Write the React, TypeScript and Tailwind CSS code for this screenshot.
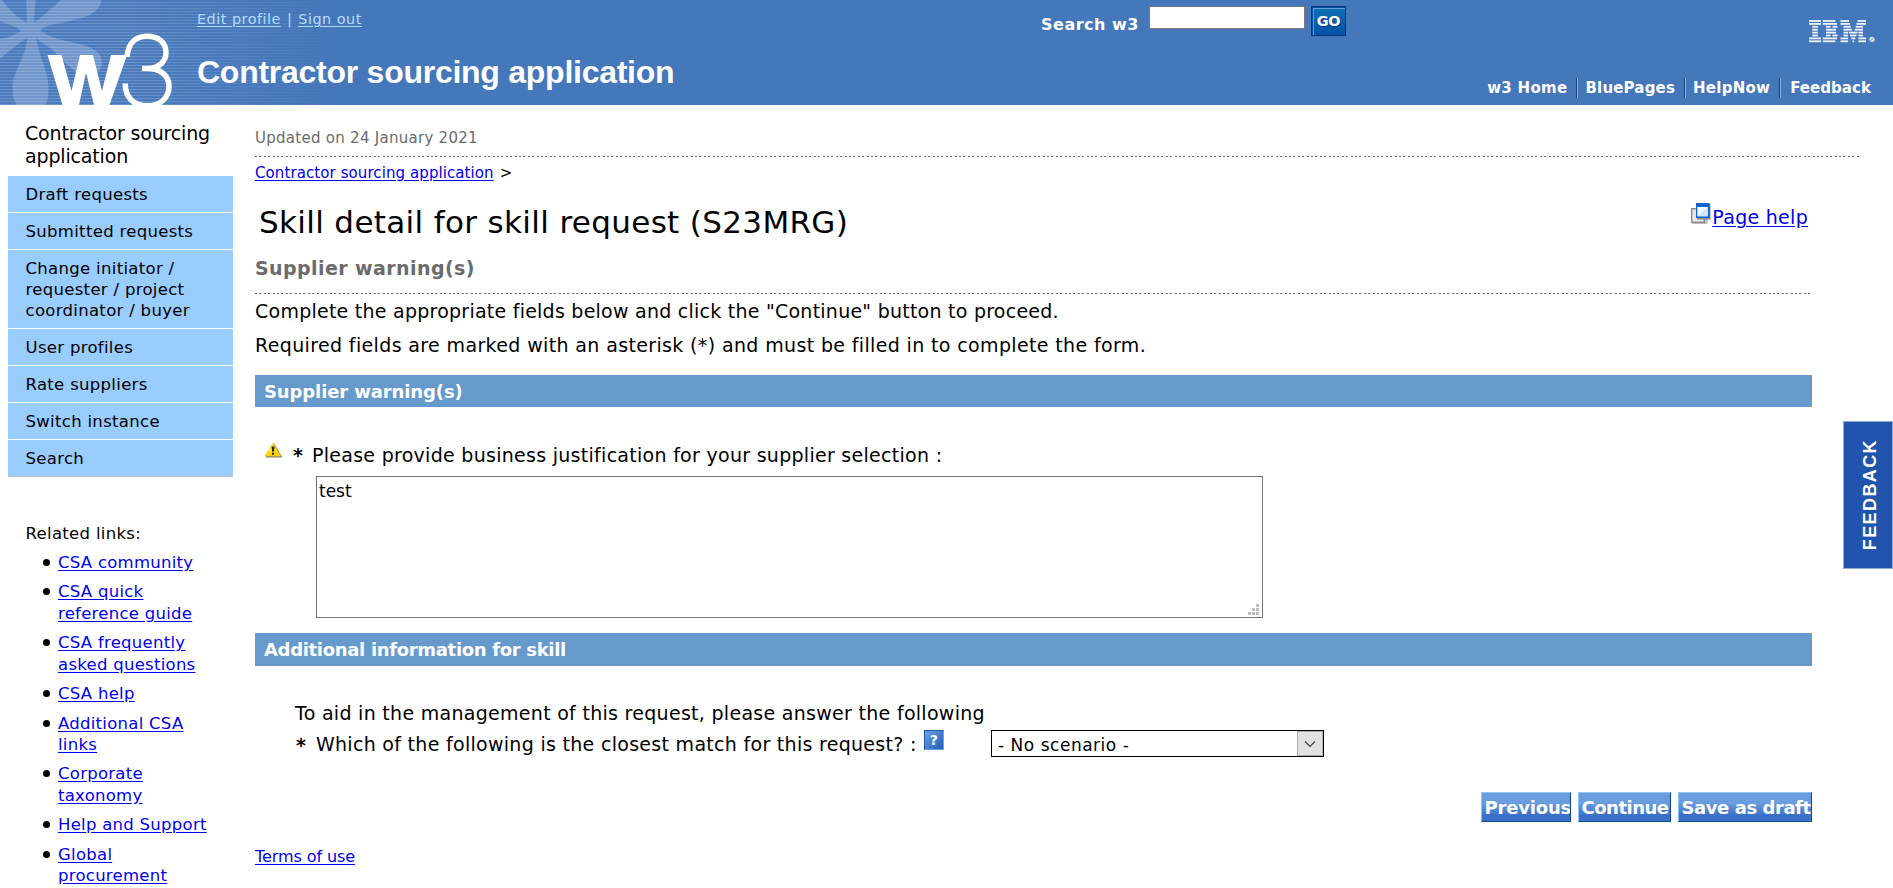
import type { ReactNode } from "react";

const navItems = [
  "Draft requests",
  "Submitted requests",
  "Change initiator / requester / project coordinator / buyer",
  "User profiles",
  "Rate suppliers",
  "Switch instance",
  "Search",
];

const relatedLinks = [
  "CSA community",
  "CSA quick reference guide",
  "CSA frequently asked questions",
  "CSA help",
  "Additional CSA links",
  "Corporate taxonomy",
  "Help and Support",
  "Global procurement",
];

/* One entry per stripe of the logo: [start, width] segments */
const ibmStripes: [number, number][][] = [
  [[0, 12], [13.8, 12.5], [31.5, 8.5], [48.5, 8.5]],
  [[0, 12], [13.8, 14.2], [31.5, 9.5], [47.5, 9.5]],
  [[3.2, 5.6], [17, 4.5], [23.5, 5], [34.5, 7.3], [46.7, 7.3]],
  [[3.2, 5.6], [17, 10], [34.5, 8.3], [45.7, 8.3]],
  [[3.2, 5.6], [17, 10], [34.5, 4.6], [40, 8.5], [49.4, 4.6]],
  [[3.2, 5.6], [17, 4.5], [23.5, 5], [34.5, 4.6], [41, 6.5], [49.4, 4.6]],
  [[0, 12], [13.8, 14.2], [31.5, 7.6], [42.3, 4], [49.4, 7.6]],
  [[0, 12], [13.8, 12.5], [31.5, 7.6], [43.5, 1.6], [49.4, 7.6]],
];

function IbmLogo() {
  return (
    <svg width="67" height="23" viewBox="0 0 67 23" className="block">
      {ibmStripes.map((row, i) =>
        row.map(([x, w], j) => (
          <rect key={`${i}-${j}`} x={x} y={i * 2.9 + 0.1} width={w} height="1.8" fill="#eef3fa" />
        ))
      )}
      <circle cx="63" cy="19.3" r="2.6" fill="#dbe5f3" />
      <path d="M61.3 20.8l3.2-3" stroke="#4577bb" strokeWidth="0.8" />
    </svg>
  );
}

function W3Logo() {
  return (
    <svg width="190" height="105" viewBox="0 0 190 105" className="block">
      <g fill="#fff" fillOpacity="0.21">
        <path d="M26 0h9.5c-.6 10-1.500 17-1 22.500C42 17 52 8 61 0h40.500c-1 11-13 17-29 20.500C58 23.500 46 25 40.500 30 46 36 60 40 75 43c17 3.500 26.500 9 27 19 0 8-6 13-14 13-11 0-19-8-27-17-8-8-15-13-24.500-19.500C37 52 48.500 70 48.500 89c0 6-1 11-3 16h-29c-2.500-5-4-10-4-16C12.500 70 27 56 27 38.500 19 43 10 50 0 59V39c8-1.500 15-4 21-8.500C15 26 8 24 0 21.500V0h2c6 8 13 16.500 24.500 22.500C27.500 17 26.500 8 26 0z" />
      </g>
      <path fill="#fff" d="M47.500 55H61.500L71.500 91 80 55H93L102 91 111 55H127L109.500 105H94L86 72.500 79 105H62.500z" />
      <path
        fill="none"
        stroke="#fff"
        strokeWidth="5.5"
        d="M127 57C128 44 135 36.200 147 36.200C158.500 36.200 166 42.500 166 52.500C166 63 157 68.600 147 68.600H142M147 68.600C160 68.600 169 75 169 86.500C169 98 160 105.800 147.500 105.800C134 105.800 125.200 98 125.200 83.500"
      />
    </svg>
  );
}

function DottedRule({ className }: { className: string }) {
  return (
    <div
      className={`h-px bg-[repeating-linear-gradient(90deg,#666_0px,#666_2px,#fff_2px,#fff_4.4px)] ${className}`}
    />
  );
}

function SectionBar({ className, children }: { className: string; children: ReactNode }) {
  return (
    <h3 className={`bg-[#6699cc] pl-[9px] text-[18px] font-bold text-white ${className}`}>{children}</h3>
  );
}

function ActionButton({ className, children }: { className: string; children: ReactNode }) {
  return (
    <button
      className={`h-[30px] overflow-hidden whitespace-nowrap border border-t-[#8fc3f5] border-l-[#8fc3f5] border-r-[#0f4c94] border-b-[#0f4c94] bg-linear-to-b from-[#6a9ce0] from-35% to-[#3a70c8] to-80% pl-[2.500px] text-left text-[18px] font-bold leading-[30px] text-white ${className}`}
    >
      {children}
    </button>
  );
}

function NavDivider() {
  return <span className="h-[20px] w-[2px] border-l border-l-[#12427f] bg-[#8db4ea]" />;
}

function Header() {
  return (
    <header className="relative flex h-[105px] bg-[#4577bb] text-white">
      <div className="absolute inset-y-0 left-0 w-[400px] bg-[repeating-linear-gradient(180deg,rgba(255,255,255,0.03)_0px,rgba(255,255,255,0.03)_2px,rgba(255,255,255,0.22)_2px,rgba(255,255,255,0.22)_3px)] mask-[linear-gradient(90deg,#000_0%,#000_30%,transparent_85%)]" />
      <div className="relative w-[190px]">
        <W3Logo />
      </div>
      <div className="relative w-[820px] pl-[7px]">
        <div className="mt-[9px] h-[20px] text-[14.400px] leading-[20px] tracking-[0.500px] text-[#b5dcff]">
          <a className="underline underline-offset-2">Edit profile</a>
          <span className="mx-[6px]">|</span>
          <a className="underline underline-offset-2">Sign out</a>
        </div>
        <h1 className="mt-[23px] font-['Liberation_Sans',Arial,sans-serif] text-[32px] font-bold leading-[40px] tracking-[-0.260px]">
          Contractor sourcing application
        </h1>
      </div>
      <div className="flex flex-1 flex-col">
        <div className="flex h-[78px] items-start">
          <label className="mt-[15px] w-[132px] pl-[31px] text-[16px] font-bold leading-[20px] tracking-[0.5px]">
            <span className="whitespace-nowrap">Search w3</span>
          </label>
          <input className="mt-[6px] ml-[7px] h-[23px] w-[156px] border border-[#7a7a7a] bg-white" />
          <button className="mt-[6px] ml-[6px] h-[30px] w-[35px] border border-[#04327f] bg-linear-to-b from-[#1173b5] to-[#0550a5] text-[14.500px] font-bold leading-[29px] tracking-[-0.3px] shadow-[inset_1px_1px_0_#0550a5,inset_2px_2px_0_#5fa0dc] [text-shadow:1px_1px_0_#04327f]">
            GO
          </button>
          <div className="mt-[20px] ml-auto mr-[17px]">
            <IbmLogo />
          </div>
        </div>
        <nav className="flex justify-end pr-[22px] text-[15px] font-bold leading-[20px]">
          <a className="mr-[9px] tracking-[0.3px]">w3 Home</a>
          <NavDivider />
          <a className="mr-[9px] ml-[7px] tracking-[0.180px]">BluePages</a>
          <NavDivider />
          <a className="mr-[9px] ml-[7px] tracking-[0.250px]">HelpNow</a>
          <NavDivider />
          <a className="ml-[9px] tracking-[0.050px]">Feedback</a>
        </nav>
      </div>
    </header>
  );
}

function Sidebar() {
  return (
    <aside className="w-[255px] shrink-0 pt-[17px] pl-[8px]">
      <h2 className="h-[54px] w-[215px] pl-[17px] text-[19px] leading-[23.300px] tracking-[-0.160px]">
        Contractor sourcing application
      </h2>
      <ul className="flex w-[225px] flex-col gap-px border-b border-[#c4c4c4] text-[16.500px] leading-[21px] tracking-[0.310px]">
        {navItems.map((item) => (
          <li key={item} className="bg-[#99ccff] pt-[8px] pr-[24px] pb-[7px] pl-[17.500px]">
            {item}
          </li>
        ))}
      </ul>
      <p className="mt-[46px] pl-[17.500px] text-[16.500px] leading-[21px] tracking-[0.310px]">Related links:</p>
      <ul className="mt-[8px] flex w-[205px] flex-col gap-[8.200px] pl-[50px] text-[16.500px] leading-[21.300px] tracking-[0.270px]">
        {relatedLinks.map((link) => (
          <li key={link} className="relative">
            <span className="absolute top-[7px] -left-[15px] size-[7px] rounded-full bg-black" />
            <a className="block text-[#0000ee] underline underline-offset-2">{link}</a>
          </li>
        ))}
      </ul>
    </aside>
  );
}

function PopupIcon() {
  return (
    <svg width="20" height="21" viewBox="0 0 20 21" className="block">
      <rect x="1.500" y="8" width="15" height="13" fill="#bbb" />
      <rect x="0.700" y="5.700" width="12.600" height="13.600" fill="#e8e8e8" stroke="#8a8a8a" strokeWidth="1.400" />
      <rect x="6" y="1" width="13.500" height="15.500" fill="#888" />
      <rect x="5" y="0" width="13.500" height="15" fill="#0b66cc" />
      <rect x="6.500" y="4" width="10.500" height="9.500" fill="#cfe4fb" />
      <path d="M6.500 4H17L6.500 13.500z" fill="#eff7ff" />
    </svg>
  );
}

function WarningIcon() {
  return (
    <svg width="19" height="16" viewBox="0 0 19 16" className="block">
      <path d="M10 1L18.500 15.500H1.500z" fill="#8f8a6c" />
      <path d="M9 0.500L17 14.300H0.500z" fill="#fbd107" />
      <path d="M9 1.500L4 9.500h4z" fill="#fff04a" />
      <path d="M7.500 4.500h3l-.6 5h-1.800zM8 10.700h2v2H8z" fill="#222" />
    </svg>
  );
}

function HelpIcon() {
  return (
    <span className="flex h-[20px] w-[20px] items-center justify-center border border-[#1f58a8] border-r-[#6ea2dd] border-b-[#6ea2dd] bg-linear-to-br from-[#6fa3e6] to-[#1c5cb8] text-[14px] font-bold leading-[18px] text-white">
      ?
    </span>
  );
}

function Main() {
  return (
    <main className="w-[1605px] shrink-0 pt-[23px]">
      <p className="text-[15px] leading-[20px] tracking-[0.275px] text-[#6b6b6b]">Updated on 24 January 2021</p>
      <DottedRule className="mt-[8px]" />
      <p className="mt-[6px] text-[15px] leading-[20px] tracking-[0.090px]">
        <a className="text-[#0000ee] underline underline-offset-2">Contractor sourcing application</a>
        <span className="ml-[6px]">&gt;</span>
      </p>
      <div className="w-[1557px]">
        <div className="mt-[20px] flex h-[40px] justify-between pl-[4px] pr-[4px]">
          <h1 className="text-[31px] leading-[39px] tracking-[0.340px]">Skill detail for skill request (S23MRG)</h1>
          <div className="flex">
            <PopupIcon />
            <a className="mt-[2px] ml-px h-[24px] text-[19px] leading-[24px] tracking-[0.280px] text-[#0000ee] underline underline-offset-2">
              Page help
            </a>
          </div>
        </div>
        <h2 className="mt-[13px] text-[19px] font-bold leading-[24px] tracking-[0.420px] text-[#6b6b6b]">
          Supplier warning(s)
        </h2>
        <DottedRule className="mt-[13px] mr-[2px]" />
        <p className="mt-[5px] text-[19px] leading-[24px] tracking-[0.245px]">
          Complete the appropriate fields below and click the "Continue" button to proceed.
        </p>
        <p className="mt-[10px] text-[19px] leading-[24px] tracking-[0.362px]">
          Required fields are marked with an asterisk (*) and must be filled in to complete the form.
        </p>
        <SectionBar className="mt-[18px] h-[32px] leading-[34px] tracking-[-0.110px]">Supplier warning(s)</SectionBar>

        <div className="mt-[35px] flex h-[24px] pl-[9px] text-[19px] leading-[24px]">
          <WarningIcon />
          <span className="ml-[10px] font-bold leading-[26px]">*</span>
          <span className="ml-[9px] pt-px tracking-[0.285px]">
            Please provide business justification for your supplier selection :
          </span>
        </div>
        <div className="relative mt-[10px] ml-[61px] h-[142px] w-[947px] border border-[#767676] bg-white pt-[4px] pl-[2px] text-[17px] leading-[20px]">
          test
          <svg width="12" height="12" viewBox="0 0 12 12" className="absolute right-[2px] bottom-[1px]">
            <path
              fill="#bdbdbd"
              d="M8 0h3v3H8zM4 4h3v3H4zM8 4h3v3H8zM0 8h3v3H0zM4 8h3v3H4zM8 8h3v3H8z"
            />
          </svg>
        </div>
        <SectionBar className="mt-[15px] h-[33px] leading-[33px] tracking-[-0.320px]">
          Additional information for skill
        </SectionBar>

        <p className="mt-[35px] pl-[40px] text-[19px] leading-[24px] tracking-[0.290px]">
          To aid in the management of this request, please answer the following
        </p>
        <div className="mt-[5px] flex h-[27px] pl-[41px] text-[19px] leading-[28px]">
          <span className="leading-[30px] font-bold">*</span>
          <span className="ml-[10px] tracking-[0.295px]">
            Which of the following is the closest match for this request? :
          </span>
          <span className="ml-[7px]">
            <HelpIcon />
          </span>
          <div className="mr-[488px] ml-auto flex h-[27px] w-[333px] border border-black bg-white">
            <span className="flex-1 pl-[6px] text-[17px] leading-[28px] tracking-[0.520px]">- No scenario -</span>
            <span className="flex h-[25px] w-[26px] items-center justify-center border border-[#adadad] bg-[#e1e1e1]">
              <svg width="12" height="8" viewBox="0 0 12 8">
                <path d="M1 1.500l5 5 5-5" fill="none" stroke="#444" strokeWidth="1.200" />
              </svg>
            </span>
          </div>
        </div>

        <div className="mt-[35px] flex h-[30px] justify-end gap-[7px]">
          <ActionButton className="w-[90px] tracking-[-0.190px]">Previous</ActionButton>
          <ActionButton className="w-[93px] tracking-[-0.500px]">Continue</ActionButton>
          <ActionButton className="w-[134px] tracking-[-0.430px]">Save as draft</ActionButton>
        </div>
      </div>
      <p className="mt-[25px] text-[16px] leading-[20px] tracking-[-0.080px]">
        <a className="text-[#0000ee] underline underline-offset-2">Terms of use</a>
      </p>
    </main>
  );
}

export default function App() {
  return (
    <div className="h-[888px] w-[1893px] overflow-hidden bg-white font-['DejaVu_Sans',Verdana,sans-serif] text-black">
      <Header />
      <div className="flex">
        <Sidebar />
        <Main />
      </div>
      <button className="fixed top-[421px] right-0 flex h-[148px] w-[50px] items-center justify-center border border-[#8ea9da] bg-[#2155ad] font-['Liberation_Sans',Arial,sans-serif] text-[18px] font-bold tracking-[1.400px] text-white">
        <span className="rotate-180 pr-[4px] [writing-mode:vertical-rl]">FEEDBACK</span>
      </button>
    </div>
  );
}
